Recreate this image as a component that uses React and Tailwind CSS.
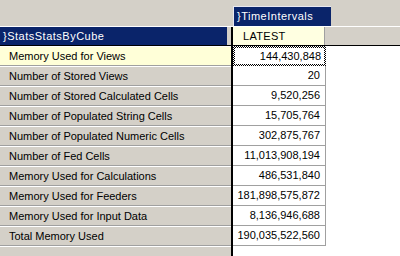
import React from "react";

const rows = [
  ["Memory Used for Views", "144,430,848"],
  ["Number of Stored Views", "20"],
  ["Number of Stored Calculated Cells", "9,520,256"],
  ["Number of Populated String Cells", "15,705,764"],
  ["Number of Populated Numeric Cells", "302,875,767"],
  ["Number of Fed Cells", "11,013,908,194"],
  ["Memory Used for Calculations", "486,531,840"],
  ["Memory Used for Feeders", "181,898,575,872"],
  ["Memory Used for Input Data", "8,136,946,688"],
  ["Total Memory Used", "190,035,522,560"],
];

export default function App() {
  return (
    <div className="w-[400px] h-[256px] overflow-hidden bg-[#d4d0c8] font-['Liberation_Sans',Arial,sans-serif] text-[11px] leading-none text-black">
      {/* top area */}
      <div className="h-[26px] flex pl-[233px] pt-[6px]">
        <div className="w-[98px] h-[20px] bg-[#0a246a] border-t border-l border-[#e8e8f0] text-white flex items-center pl-[3px] tracking-[0.5px]">
          }TimeIntervals
        </div>
      </div>
      <div className="h-px bg-white" />
      {/* header row */}
      <div className="h-[18px] flex">
        <div className="w-[227px] bg-[#0a246a] text-white flex items-center pl-[3px] tracking-[0.5px]">
          }StatsStatsByCube
        </div>
        <div className="w-[4px]" />
        <div className="w-[2px] bg-black" />
        <div className="w-[92px] bg-[#ffffe1] border-r border-[#a0a0a0] flex items-center pl-[10px] tracking-[0.3px]">
          LATEST
        </div>
        <div className="flex-1" />
      </div>
      <div className="h-px bg-black" />
      {/* body */}
      <div className="flex h-[210px]">
        <div className="w-[231px] flex flex-col">
          {rows.map(([label], i) => (
            <div
              key={label}
              className={
                "h-[20px] shrink-0 border-t border-b border-t-white border-b-[#a0a0a0] flex items-center pl-[9px] " +
                (i === 0 ? "bg-[#ffffd8] border-t-[#ffffd8]" : "bg-[#d4d0c8]")
              }
            >
              {label}
            </div>
          ))}
          <div className="h-px bg-white shrink-0" />
        </div>
        <div className="w-[2px] bg-black" />
        <div className="flex-1 bg-white">
          <div className="w-[93px] flex flex-col">
            {rows.map(([label, value], i) =>
              i === 0 ? (
                <div
                  key={label}
                  className="h-[20px] shrink-0 p-[2px] bg-[repeating-conic-gradient(#000_0_25%,#fff_0_50%)] bg-size-[2px_2px]"
                >
                  <div className="h-full bg-white flex items-center justify-end pr-[3px]">
                    {value}
                  </div>
                </div>
              ) : (
                <div
                  key={label}
                  className="h-[20px] shrink-0 border-b border-r border-[#a0a0a0] flex items-center justify-end pr-[5px]"
                >
                  {value}
                </div>
              )
            )}
          </div>
        </div>
      </div>
    </div>
  );
}
